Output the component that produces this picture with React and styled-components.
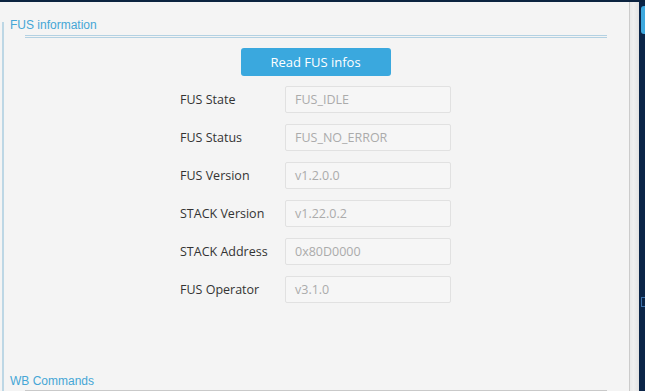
import React from 'react'
import styled, { createGlobalStyle } from 'styled-components'

const GlobalStyle = createGlobalStyle`
  html, body {
    margin: 0;
    padding: 0;
    background: #f4f4f4;
  }
  body {
    width: 645px;
    height: 391px;
    overflow: hidden;
  }
`

const Page = styled.div`
  display: flex;
  flex-direction: column;
  width: 645px;
  height: 391px;
  overflow: hidden;
  background: #f4f4f4;
`

const TopStrip = styled.div`
  height: 2px;
  background: #0b2340;
  flex-shrink: 0;
`

const Body = styled.div`
  flex: 1;
  display: flex;
  min-height: 0;
`

const Main = styled.div`
  flex: 1;
  display: flex;
  min-width: 0;
`

const Rail = styled.div`
  width: 2px;
  margin-left: 2px;
  margin-top: 20px;
  background: #bdd7e5;
  flex-shrink: 0;
`

const Content = styled.div`
  flex: 1;
  display: flex;
  flex-direction: column;
  padding-left: 6px;
  min-width: 0;
`

const SectionTitle = styled.div`
  font-family: "Liberation Sans", Arial, sans-serif;
  font-size: 12px;
  line-height: 14px;
  color: #45a6d6;
  margin-top: ${({ top }) => top}px;
`

const SectionRule = styled.div`
  box-sizing: border-box;
  margin: ${({ gap }) => gap}px 22px 0 15px;
  height: ${({ collapsed }) => (collapsed ? '1px' : '3px')};
  border-top: 1px solid ${({ collapsed }) => (collapsed ? '#c9c9c9' : '#b3d1e2')};
  border-bottom: ${({ collapsed }) => (collapsed ? 'none' : '1px solid #b3d1e2')};
  flex-shrink: 0;
`

const Form = styled.div`
  display: flex;
  flex-direction: column;
  align-items: center;
  margin-top: 10px;
  padding-right: 8px;
`

const ReadButton = styled.button`
  width: 150px;
  height: 28px;
  border: none;
  border-radius: 3px;
  background: #3aa8de;
  color: #ffffff;
  font-family: "Open Sans", "Noto Sans", sans-serif;
  font-size: 13px;
  padding: 0 0 1px;
  cursor: pointer;
`

const Rows = styled.div`
  display: flex;
  flex-direction: column;
  gap: 11px;
  margin-top: 10px;
`

const Row = styled.div`
  display: grid;
  grid-template-columns: 105px 166px;
  align-items: center;
`

const Label = styled.div`
  font-family: "Open Sans", "Noto Sans", sans-serif;
  font-size: 12.5px;
  color: #333333;
`

const Field = styled.div`
  box-sizing: border-box;
  height: 27px;
  border: 1px solid #e1e1e1;
  border-radius: 2px;
  background: #f6f6f6;
  padding-left: 9px;
  display: flex;
  align-items: center;
  font-family: "Open Sans", "Noto Sans", sans-serif;
  font-size: 12.5px;
  color: #ababab;
`

const Spacer = styled.div`
  flex: 1;
`

const Divider = styled.div`
  width: 9px;
  flex-shrink: 0;
  border-left: 1px solid #cbcbcb;
  background: linear-gradient(to right, #e9e9e9, #f0f0f0 40%, #e2e2e2);
`

const SidePanel = styled.div`
  width: 6px;
  flex-shrink: 0;
  background: #0b2548;
  display: flex;
  flex-direction: column;
  align-items: flex-end;
`

const SideTile = styled.div`
  width: 4px;
  height: 28px;
  margin-top: 4px;
  border-radius: 3px 0 0 3px;
  background: #3ea8de;
`

const SideMark = styled.div`
  width: 3px;
  height: 8px;
  margin-top: 263px;
  border: 1px solid #3b6fa8;
  border-right: none;
`

const fusInfo = [
  ['FUS State', 'FUS_IDLE'],
  ['FUS Status', 'FUS_NO_ERROR'],
  ['FUS Version', 'v1.2.0.0'],
  ['STACK Version', 'v1.22.0.2'],
  ['STACK Address', '0x80D0000'],
  ['FUS Operator', 'v3.1.0'],
]

export default function App() {
  return (
    <Page>
      <GlobalStyle />
      <TopStrip />
      <Body>
        <Main>
          <Rail />
          <Content>
            <SectionTitle top={16}>FUS information</SectionTitle>
            <SectionRule gap={3} />
            <Form>
              <ReadButton>Read FUS infos</ReadButton>
              <Rows>
                {fusInfo.map(([label, value]) => (
                  <Row key={label}>
                    <Label>{label}</Label>
                    <Field>{value}</Field>
                  </Row>
                ))}
              </Rows>
            </Form>
            <Spacer />
            <SectionTitle top={0}>WB Commands</SectionTitle>
            <SectionRule gap={2} collapsed />
          </Content>
        </Main>
        <Divider />
        <SidePanel>
          <SideTile />
          <SideMark />
        </SidePanel>
      </Body>
    </Page>
  )
}
